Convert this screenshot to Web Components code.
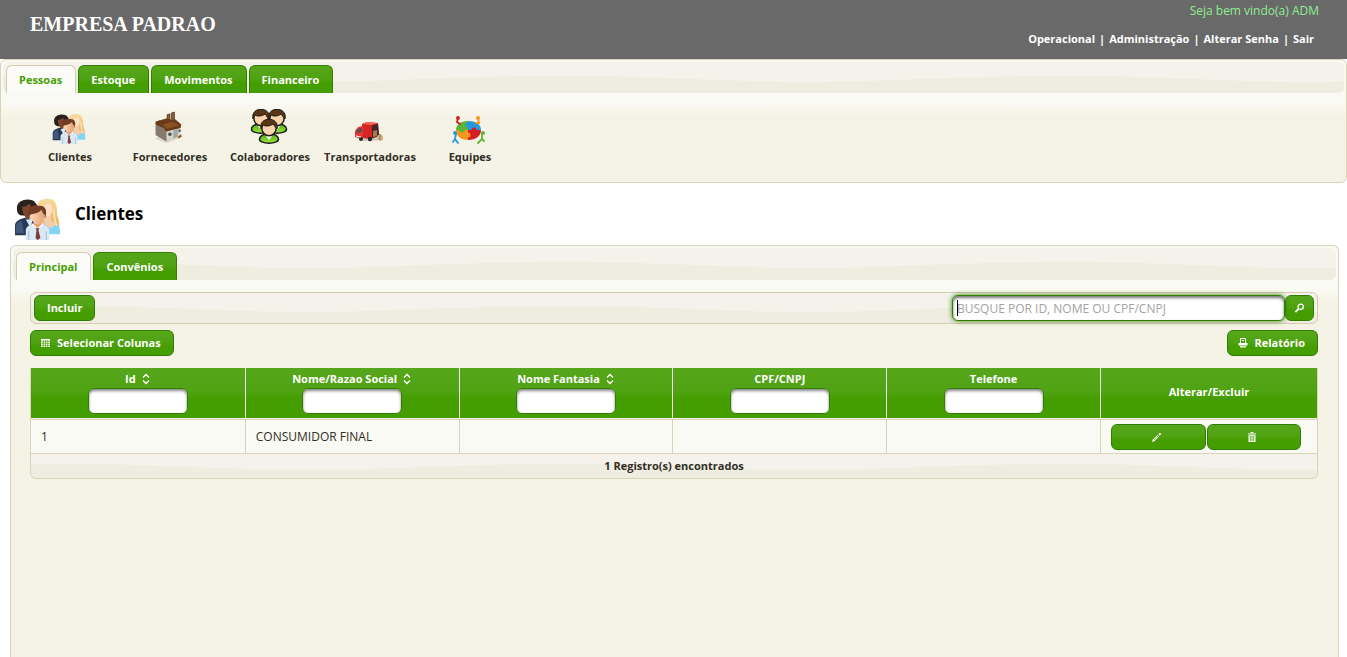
<!DOCTYPE html>
<html lang="pt-BR">
<head>
<meta charset="utf-8">
<title>Clientes</title>
<style>
:root{
  --green:#459e00;
  --line:#d9d3b8;
  --bold:bold 11px/16px "Open Sans","Noto Sans",sans-serif;
  --btn:linear-gradient(#56a61b 0,#50a313 45%,#459e00 62%);
  --wave:url("data:image/svg+xml,%3Csvg xmlns='http://www.w3.org/2000/svg' width='500' height='100'%3E%3Crect width='500' height='100' fill='%23f5f2eb'/%3E%3Cpath d='M0 51C60 49 90 48 147 48C235 48 300 54 377 54C430 54 450 53 500 51V100H0Z' fill='%23efece0'/%3E%3C/svg%3E") 50% 50% repeat-x;
}
body{margin:0;background:#fff;color:#312e25;font:12px/16px "Open Sans","Noto Sans",sans-serif;min-height:100vh;display:flex;flex-direction:column}
</style>
</head>
<body>
<app-header company="EMPRESA PADRAO" welcome="Seja bem vindo(a) ADM">
  <nav-link>Operacional</nav-link>
  <nav-link>Administração</nav-link>
  <nav-link>Alterar Senha</nav-link>
  <nav-link>Sair</nav-link>
</app-header>

<tab-panel>
  <tab-item slot="tab" active>Pessoas</tab-item>
  <tab-item slot="tab">Estoque</tab-item>
  <tab-item slot="tab">Movimentos</tab-item>
  <tab-item slot="tab">Financeiro</tab-item>
  <icon-bar>
    <icon-link icon="clients">Clientes</icon-link>
    <icon-link icon="factory">Fornecedores</icon-link>
    <icon-link icon="staff">Colaboradores</icon-link>
    <icon-link icon="truck">Transportadoras</icon-link>
    <icon-link icon="team">Equipes</icon-link>
  </icon-bar>
</tab-panel>

<page-title icon="clients">Clientes</page-title>

<tab-panel fill>
  <tab-item slot="tab" active>Principal</tab-item>
  <tab-item slot="tab">Convênios</tab-item>
  <client-list></client-list>
</tab-panel>

<script>
const staff = (x, y) => `
  <g transform="translate(${x} ${y})" stroke="#1c1c18" stroke-width="1.5">
  <path d="M-9.5 9C-9 5-5 4 0 4S9 5 9.5 9C10 14.5-10 14.5-9.5 9Z" fill="url(#shirt)"/>
  <path d="M-4 5L0 10L4 5Z" fill="#fff" stroke="none"/>
  <ellipse cy="-2" rx="7.2" ry="7.8" fill="#f8d3ab"/>
  <path d="M-8-1C-11-14 11-14 8-1C6-3 5-5 4-6C0-3-5-4-6-5Z" fill="#5b3516" stroke-width="1"/></g>`;
const ICONS = {
  clients: ['0 0 48 44', `
    <defs><linearGradient id="hair" x2="0" y2="1"><stop stop-color="#f9dc9c"/><stop offset="1" stop-color="#e7ae66"/></linearGradient>
    <linearGradient id="skin" x2="1"><stop stop-color="#ffd9b8"/><stop offset="1" stop-color="#e0a074"/></linearGradient></defs>
    <path d="M1 38V28C1 23 8 21 12 20L21 24V38Z" fill="#263856"/>
    <path d="M2 36V29C2 26 5 24 8 23L10 36Z" fill="#42577c"/>
    <path d="M12 22L17 31L19 22Z" fill="#dce8f5"/>
    <path d="M3 11C2 1 18-1 22 5C26 9 24 16 20 18L8 18C4 17 3 15 3 11Z" fill="#2a211e"/>
    <path d="M8 9C12 9 14 8 15 6C19 8 20 17 16 21C13 23 9 18 8 9Z" fill="#7b452e"/>
    <path d="M24 14C21 3 29 0 36 1C44 1 44 11 44 16C45 22 47 24 46 30L24 29Z" fill="url(#hair)"/>
    <path d="M27 37V28L33 24C42 24 47 27 47 33V37Z" fill="#84d4f5"/>
    <path d="M31 17H38V23L43 27L37 31L31 27Z" fill="#f6ccaa"/>
    <path d="M27 8C32 8 34 6 35 5C41 7 40 16 35 19C30 18 27 13 27 8Z" fill="#ffe0c6"/>
    <path d="M40 11C42 16 40 22 44 28" fill="none" stroke="#fbe4a7" stroke-width="2"/>
    <path d="M12 43V33C12 28 18 27 23 27S36 28 36 33V43Z" fill="#d8e8f5"/>
    <path d="M15 43V34M33 43V34" stroke="#a8c1d9"/>
    <path d="M18 28L24 32L30 28V26H18Z" fill="#f5fbff"/>
    <path d="M22 31H26L25 33L27 41L24 43L22 41L23 33Z" fill="#803b32"/>
    <path d="M20 23H28V27L24 31L20 27Z" fill="#e4a073"/>
    <path d="M15 18C13 9 19 7 25 8C33 7 34 14 32 20L17 21Z" fill="#713c24"/>
    <path d="M17 17C22 16 26 15 28 12C29 15 30 16 31 17C33 18 31 21 30 21C28 28 20 29 18 21C16 21 15 19 17 17Z" fill="url(#skin)"/>`],
  factory: ['0 0 34 38', `
    <path d="M1 31L14 36L33 29L20 21Z" fill="#a5a49d" opacity=".35"/>
    <path d="M15 11V4L18 3V13M20 11V2L23 1V13" fill="#96653a" stroke="#4f2d16"/>
    <path d="M2 12L7 10V14L12 10L13 16L18 30L14 34L2 27Z" fill="#6e655d"/>
    <path d="M2 12L7 15V11L12 15L14 22V34L2 27Z" fill="#857a6d"/>
    <path d="M14 22L30 16V28L14 34Z" fill="#d3d2cb"/>
    <path d="M2 12L8 10L15 8L20 10L24 9L31 15L30 19L14 23L11 19L2 15Z" fill="#6b3a18"/>
    <path d="M9 15L21 12L29 16L15 20Z" fill="#875124"/>
    <path d="M22 22L27 20V29L22 31Z" fill="#a3a5a2"/>
    <circle cx="18" cy="26" r="2" fill="#4e5358"/><circle cx="29" cy="22" r="1.4" fill="#555"/>
    <path d="M27 29L31 26V29L28 31Z" fill="#8d5426"/>`],
  staff: ['0 0 38 36', `<defs><linearGradient id="shirt" x2="0" y2="1"><stop stop-color="#4faa18"/><stop offset="1" stop-color="#9aea3c"/></linearGradient></defs>` + staff(11, 11) + staff(27, 11) + staff(19, 21)],
  truck: ['0 0 30 24', `
    <path d="M1 16L10 20L29 19L25 15Z" fill="#666" opacity=".3"/>
    <path d="M8 3L13 1L24 2L25 15L17 18L8 17Z" fill="#d42424"/>
    <path d="M8 3L13 1L24 2L18 4Z" fill="#f36457"/>
    <path d="M1 10L4 6L9 5V18L1 16Z" fill="#e53832"/>
    <path d="M2 10L5 7L8 7V11L2 12Z" fill="#6d4950"/>
    <path d="M18 4L24 3L25 15L18 17Z" fill="#42261f"/>
    <path d="M19 10L23 9V15L19 16Z" fill="#a57752"/>
    <circle cx="7" cy="18" r="2" fill="#2a2525"/><circle cx="16" cy="18" r="2.2" fill="#2a2525"/>
    <path d="M2 15L7 16" stroke="#fff"/>
    <path d="M23 15L26 13L29 15V19L26 20L23 18Z" fill="#d1b38a"/><path d="M26 13V19" stroke="#8c6d48"/>`],
  team: ['0 0 34 30', `
    <path d="M16 6C8 6 4 10 4 15H16Z" fill="#5cb535"/>
    <path d="M16 6C25 6 29 10 29 15H16Z" fill="#2698dd"/>
    <path d="M4 15H16V25C9 25 4 21 4 15Z" fill="#f6961d"/>
    <path d="M29 15H16V25C24 25 29 21 29 15Z" fill="#d31f26"/>
    <circle cx="16" cy="10" r="2.5" fill="#2698dd"/><circle cx="22" cy="15" r="2.5" fill="#d31f26"/>
    <circle cx="16" cy="20" r="2.5" fill="#f6961d"/><circle cx="10" cy="15" r="2.5" fill="#5cb535"/>
    <g fill="none" stroke-width="1.8" stroke-linecap="round">
    <path d="M6 3L5 7L8 9" stroke="#d31f26"/><path d="M26 4L27 8L24 8" stroke="#f6961d"/>
    <path d="M4 19L3 24L6 28M3 24L1 27" stroke="#2698dd"/><path d="M30 19L30 24L26 28M30 24L32 26" stroke="#5cb535"/></g>
    <circle cx="6" cy="3" r="2" fill="#d31f26"/><circle cx="26" cy="3" r="2" fill="#f6961d"/>
    <circle cx="3" cy="18" r="2" fill="#2698dd"/><circle cx="31" cy="18" r="2" fill="#5cb535"/>`],
  grid: ['0 0 12 12', `<path d="M1 2H10V10H1Z" fill="#fff"/><path d="M1 4.3H10M1 6.3H10M1 8.3H10M3.3 3V10M5.5 3V10M7.7 3V10" stroke="#4ea211" stroke-width=".7"/>`],
  print: ['0 0 12 12', `<path d="M3.5 6V1.500H8.5V6M5 3.500H7" fill="none" stroke="#fff"/><path d="M1.5 6H10.500V8.500H1.500Z" fill="#fff"/><path d="M3 9.200H9V10.500H3Z" fill="#fff"/>`],
  search: ['0 0 12 12', `<circle cx="7.3" cy="4.6" r="2.9" fill="none" stroke="#fff" stroke-width="1.4"/><path d="M5 7L1.5 10.5" stroke="#fff" stroke-width="2"/>`],
  pencil: ['0 0 12 12', `<path d="M1 11L1.8 8.6L6.5 4L8 5.5L3.4 10.2Z" fill="#fff"/><path d="M7.4 3.2L9 1.7L10.3 3L8.7 4.6Z" fill="#fff"/><path d="M3 9L7 5" stroke="#4ea211" stroke-width=".7"/>`],
  trash: ['0 0 12 12', `<path d="M2 3H10M4.5 1.5H7.5" stroke="#fff" stroke-width="1.2"/><path d="M2.5 4.2H9.5V11H2.5Z" fill="#fff"/><path d="M4.3 5V10M6 5V10M7.7 5V10" stroke="#459e00" stroke-width=".8"/>`],
  sort: ['0 0 10 12', `<path d="M2 4.5L5 1.5L8 4.5M2 7.5L5 10.5L8 7.5" fill="none" stroke="#fff" stroke-width="1.3"/>`]
};
const SIZES = {clients: [34, 32], factory: [30, 34], staff: [38, 36], truck: [30, 24], team: [34, 30]};
const icon = (name, w, h) => `<svg width="${w}" height="${h}" viewBox="${ICONS[name][0]}" aria-hidden="true">${ICONS[name][1]}</svg>`;

function define(tag, render) {
  customElements.define(tag, class extends HTMLElement {
    connectedCallback() {
      if (this.shadowRoot) return;
      const t = document.createElement('template');
      t.innerHTML = render(this);
      this.attachShadow({mode: 'open'}).append(t.content);
    }
  });
}

define('app-header', el => `<style>
  :host{display:flex;justify-content:space-between;height:59px;background:#696969;color:#fff}
  h1{margin:13px 0 0 30px;font:bold 20px/23px "Liberation Serif",serif}
  .side{text-align:right;padding:3px 28px 0 0}
  p{margin:0 0 12px;color:#90ee90}
  nav{display:flex;justify-content:flex-end;padding-right:5px}
  </style><h1>${el.getAttribute('company')}</h1>
  <div class="side"><p>${el.getAttribute('welcome')}</p><nav><slot></slot></nav></div>`);

define('nav-link', () => `<style>
  :host{display:flex;font:var(--bold);color:#fff}
  a{color:inherit;text-decoration:none}
  :host(:not(:last-child))::after{content:"|";margin:0 4px}
  </style><a href="#"><slot></slot></a>`);

define('tab-panel', () => `<style>
  :host{display:block;box-sizing:border-box;border:1px solid var(--line);border-radius:6px;padding:2px;background:linear-gradient(#fafaf4 44px,#f5f3e5 56px)}
  :host([fill]){flex:1;margin:0 8px 0 10px;border-bottom:0;border-radius:6px 6px 0 0}
  .tabs{box-sizing:border-box;display:flex;gap:2px;height:31px;padding:3px 3px 0;border-radius:6px;background:var(--wave)}
  :host([fill]) .tabs{height:32px;padding-top:4px}
  </style><div class="tabs"><slot name="tab"></slot></div><slot></slot>`);

define('tab-item', () => `<style>
  :host{display:block}
  a{box-sizing:border-box;display:block;height:28px;padding:6px 13px 6px 12px;border:1px solid #327e04;border-bottom:0;border-radius:6px 6px 0 0;background:var(--btn);color:#fff;font:var(--bold);text-decoration:none}
  :host([active]) a{background:#fbfbf8;border-color:#d4ccb0;color:var(--green)}
  </style><a href="#"><slot></slot></a>`);

define('icon-bar', () => `<style>
  :host{display:flex;padding:15px 17px 0;height:72px}
  </style><slot></slot>`);

define('icon-link', el => `<style>
  :host{display:block;width:100px}
  a{display:flex;flex-direction:column;align-items:center;gap:4px;color:#312e25;font:var(--bold);text-decoration:none}
  .pic{display:flex;align-items:flex-end;height:37px;padding-right:3px}
  </style><a href="#"><span class="pic">${icon(el.getAttribute('icon'), ...SIZES[el.getAttribute('icon')])}</span><slot></slot></a>`);

define('page-title', el => `<style>
  :host{display:flex;gap:14px;height:47px;padding:15px 14px 0;color:#000}
  h2{margin:3px 0 0;font-size:17px;line-height:25px;font-weight:bold}
  </style>${icon(el.getAttribute('icon'), 47, 43)}<h2><slot></slot></h2>`);

define('ui-button', el => `<style>
  :host{display:block}
  button{box-sizing:border-box;display:flex;align-items:center;justify-content:center;gap:5px;width:100%;height:26px;margin:0;padding:0 12px;border:1px solid #327e04;border-radius:6px;background:var(--btn);color:#fff;font:var(--bold);cursor:pointer}
  :host([icon]) button{padding:0 12px 0 9px}
  :host([square]) button{padding:0 8px}
  </style><button type="button" aria-label="${el.getAttribute('label') || el.textContent}">${el.hasAttribute('icon') ? icon(el.getAttribute('icon'), 12, 12) : ''}<slot></slot></button>`);

define('search-box', () => `<style>
  :host{display:flex}
  .field{position:relative;width:333px}
  input{box-sizing:border-box;width:100%;height:26px;margin:0;padding:0 4px;border:1px solid #327e04;border-radius:6px;background:#fff;box-shadow:0 0 5px #327e04,inset 0 2px 3px #777;font:inherit;color:#312e25;outline:0}
  input::placeholder{color:#a3a3a3}
  .caret{position:absolute;left:5px;top:5px;width:1px;height:16px;background:#000}
  ui-button{width:29px}
  </style><div class="field"><input type="text" aria-label="Buscar" placeholder="BUSQUE POR ID, NOME OU CPF/CNPJ"><span class="caret"></span></div>
  <ui-button square icon="search" label="Buscar"></ui-button>`);

define('column-filter', el => {
  const label = el.textContent;
  return `<style>
  :host{display:block}
  label{display:flex;flex-direction:column;align-items:center}
  .name{display:flex;align-items:center;gap:5px;height:18px}
  input{box-sizing:border-box;width:100px;height:26px;padding:0 4px;border:1px solid #327e04;border-radius:6px;background:#fff;box-shadow:inset 0 2px 3px #888;font:inherit}
  </style><label><span class="name"><slot></slot>${el.hasAttribute('sort') ? icon('sort', 10, 12) : ''}</span><input type="text" aria-label="${label}"></label>`;
});

define('data-grid', () => `<style>
  :host{display:block;border:1px solid var(--line);border-top:0;border-radius:0 0 6px 6px;overflow:hidden}
  table{width:100%;table-layout:fixed;border-collapse:separate;border-spacing:0}
  .last{width:217px}
  th{box-sizing:border-box;height:51px;padding:2px 10px 4px;background:var(--btn);border-bottom:1px solid #f4f1ec;color:#fff;font:var(--bold)}
  th+th{border-left:1px solid #f4f1ec}
  td{box-sizing:border-box;height:35px;padding:0 10px;background:#fafaf4;border-top:1px solid var(--line);border-bottom:1px solid var(--line)}
  td+td{border-left:1px solid var(--line)}
  .act{display:flex;gap:1px;padding-right:6px}
  .act ui-button{flex:1}
  .foot{text-align:center;font:var(--bold);line-height:24px;background:var(--wave)}
  </style><table><colgroup><col span="5"><col class="last"></colgroup><thead><tr>
  <th scope="col"><column-filter sort>Id</column-filter></th>
  <th scope="col"><column-filter sort>Nome/Razao Social</column-filter></th>
  <th scope="col"><column-filter sort>Nome Fantasia</column-filter></th>
  <th scope="col"><column-filter>CPF/CNPJ</column-filter></th>
  <th scope="col"><column-filter>Telefone</column-filter></th>
  <th scope="col">Alterar/Excluir</th></tr></thead>
  <tbody><tr><td>1</td><td>CONSUMIDOR FINAL</td><td></td><td></td><td></td>
  <td><div class="act"><ui-button icon="pencil" label="Alterar"></ui-button><ui-button icon="trash" label="Excluir"></ui-button></div></td></tr></tbody></table>
  <div class="foot">1 Registro(s) encontrados</div>`);

define('client-list', () => `<style>
  :host{display:block;padding:12px 18px 12px 17px}
  .bar{display:flex;justify-content:space-between;align-items:center;box-sizing:border-box;height:32px;padding:0 3px;border:1px solid #d4ccb0;border-radius:6px;background:var(--wave)}
  .row{display:flex;justify-content:space-between;padding:6px 0 12px}
  </style><div class="bar"><ui-button>Incluir</ui-button><search-box></search-box></div>
  <div class="row"><ui-button icon="grid">Selecionar Colunas</ui-button><ui-button icon="print">Relatório</ui-button></div>
  <data-grid></data-grid>`);
</script>
</body>
</html>
